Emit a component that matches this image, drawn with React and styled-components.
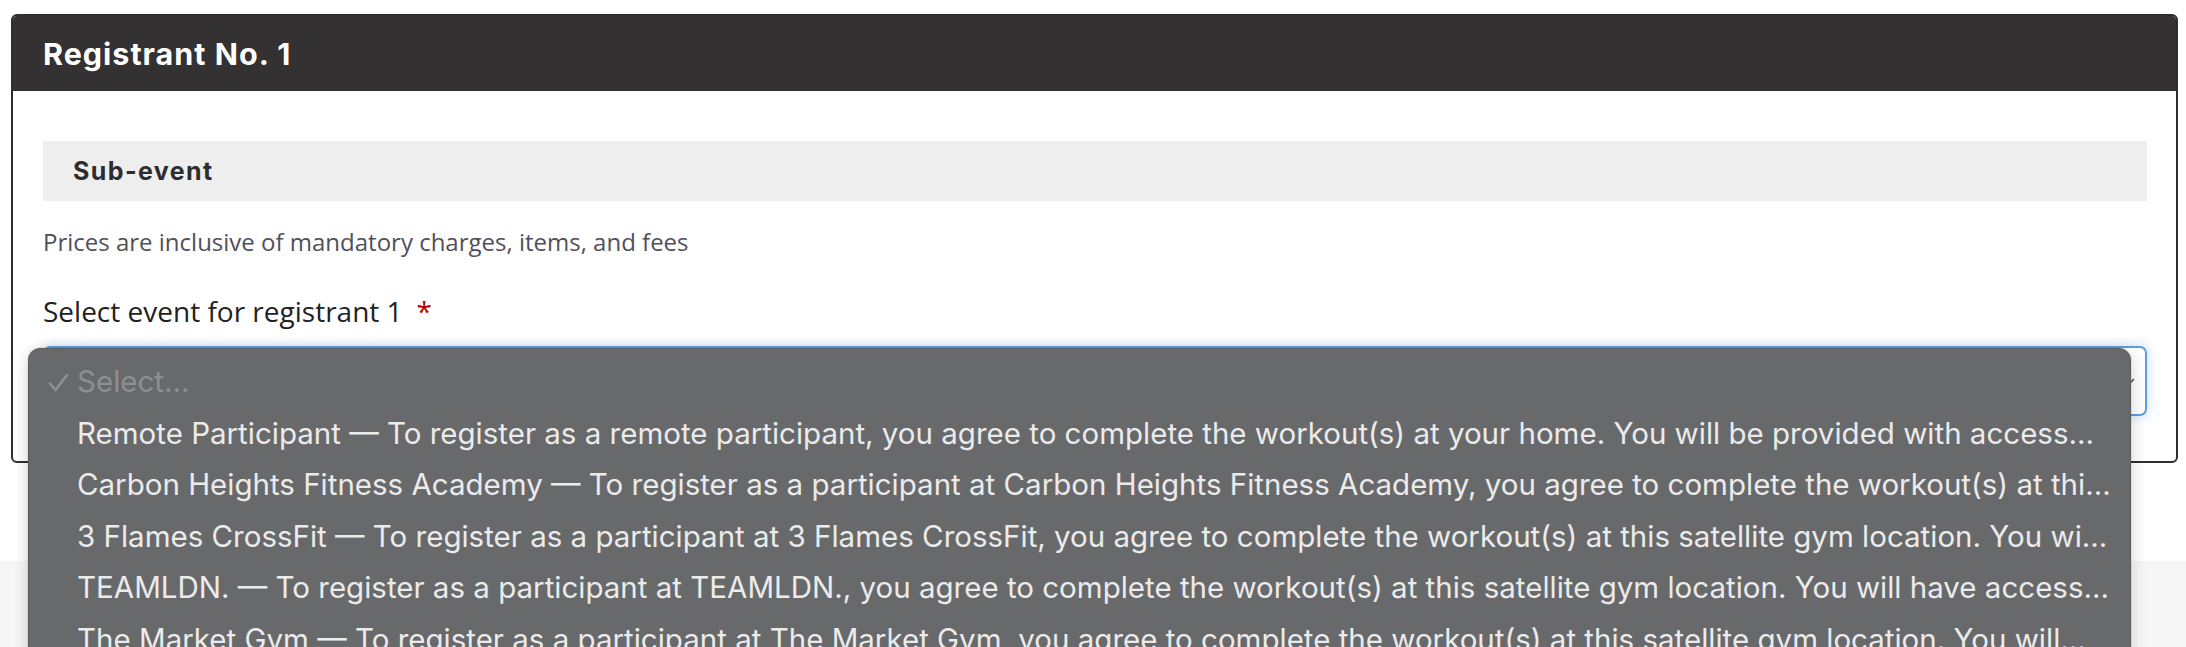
import React from 'react'
import styled, { createGlobalStyle } from 'styled-components'

const GlobalStyle = createGlobalStyle`
  html, body {
    margin: 0;
    padding: 0;
    background: #ffffff;
    overflow: hidden;
  }
  * {
    box-sizing: border-box;
  }
`

const Page = styled.div`
  width: 2186px;
  height: 647px;
  position: relative;
  overflow: hidden;
  font-family: "Open Sans", sans-serif;
`

const Wrap = styled.div`
  padding: 14px 8px 0 11px;
`

const Card = styled.section`
  border: 2px solid #2f2e2f;
  border-radius: 6px;
  background: #fff;
`

const CardHeader = styled.header`
  height: 75px;
  background: #333132;
  display: flex;
  align-items: center;
  padding-left: 30px;
  border-radius: 4px 4px 0 0;
`

const Title = styled.h2`
  margin: 0;
  font-family: Inter, sans-serif;
  font-weight: 700;
  font-size: 30.5px;
  letter-spacing: 1px;
  color: #ffffff;
`

const CardBody = styled.div`
  padding: 50px 29px 45px 30px;
`

const SectionBar = styled.div`
  height: 60px;
  background: #eeeeee;
  display: flex;
  align-items: center;
  padding-left: 30px;
`

const SectionTitle = styled.h3`
  margin: 0;
  font-family: Inter, sans-serif;
  font-weight: 700;
  font-size: 25px;
  letter-spacing: 1.4px;
  color: #2e2d2e;
`

const Note = styled.p`
  margin: 26px 0 0;
  font-size: 24px;
  line-height: 30px;
  color: #51505a;
`

const Label = styled.label`
  display: block;
  margin-top: 36px;
  font-size: 28px;
  line-height: 36px;
  color: #222;
`

const Required = styled.span`
  color: #b00000;
  margin-left: 14px;
`

const SelectBox = styled.div`
  position: relative;
  margin-top: 17px;
  height: 70px;
  border: 2px solid #5b9ee0;
  border-radius: 7px;
  box-shadow: 0 0 10px 3px rgba(91, 158, 224, 0.22);
  display: flex;
  align-items: center;
  justify-content: flex-end;
  padding-right: 8px;
`

const Chevron = styled.svg`
  width: 16px;
  height: 16px;
`

const Menu = styled.ul`
  position: absolute;
  left: -17px;
  right: 14px;
  top: 0;
  height: 320px;
  margin: 0;
  padding: 7px 0 0;
  list-style: none;
  background: #68696a;
  border: 1px solid #5c5d5e;
  border-radius: 12px;
  box-shadow: 0 4px 16px rgba(0, 0, 0, 0.18), 0 0 2px rgba(0, 0, 0, 0.2);
  overflow: hidden;
  z-index: 5;
`

const Option = styled.li`
  position: relative;
  height: 51.5px;
  line-height: 51.5px;
  padding-left: 48px;
  font-family: Inter, "Liberation Sans", sans-serif;
  font-size: 29.5px;
  white-space: nowrap;
  overflow: hidden;
  color: ${p => (p.$placeholder ? '#8e8f90' : '#ebebeb')};
`

const Check = styled.svg`
  position: absolute;
  left: 19px;
  top: 17px;
  width: 21px;
  height: 19px;
`

const Footer = styled.div`
  margin-top: 98px;
  height: 120px;
  background: #f6f6f6;
`

const options = [
  'Remote Participant — To register as a remote participant, you agree to complete the workout(s) at your home. You will be provided with access...',
  'Carbon Heights Fitness Academy — To register as a participant at Carbon Heights Fitness Academy, you agree to complete the workout(s) at thi...',
  '3 Flames CrossFit — To register as a participant at 3 Flames CrossFit, you agree to complete the workout(s) at this satellite gym location. You wi...',
  'TEAMLDN. — To register as a participant at TEAMLDN., you agree to complete the workout(s) at this satellite gym location. You will have access...',
  'The Market Gym — To register as a participant at The Market Gym, you agree to complete the workout(s) at this satellite gym location. You will...',
]

export default function App() {
  return (
    <Page>
      <GlobalStyle />
      <Wrap>
        <Card>
          <CardHeader>
            <Title>Registrant No. 1</Title>
          </CardHeader>
          <CardBody>
            <SectionBar>
              <SectionTitle>Sub-event</SectionTitle>
            </SectionBar>
            <Note>Prices are inclusive of mandatory charges, items, and fees</Note>
            <Label>
              Select event for registrant 1<Required>*</Required>
            </Label>
            <SelectBox>
              <Chevron viewBox="0 0 16 16">
                <path d="M3 6l5 5 5-5" fill="none" stroke="#555" strokeWidth="1.6" />
              </Chevron>
              <Menu>
                <Option $placeholder>
                  <Check viewBox="0 0 21 19">
                    <path d="M2 10.5l5.5 6.5L19 2" fill="none" stroke="#8e8f90" strokeWidth="2.6" strokeLinecap="round" strokeLinejoin="round" />
                  </Check>
                  Select...
                </Option>
                {options.map(o => (
                  <Option key={o}>{o}</Option>
                ))}
              </Menu>
            </SelectBox>
          </CardBody>
        </Card>
      </Wrap>
      <Footer />
    </Page>
  )
}
